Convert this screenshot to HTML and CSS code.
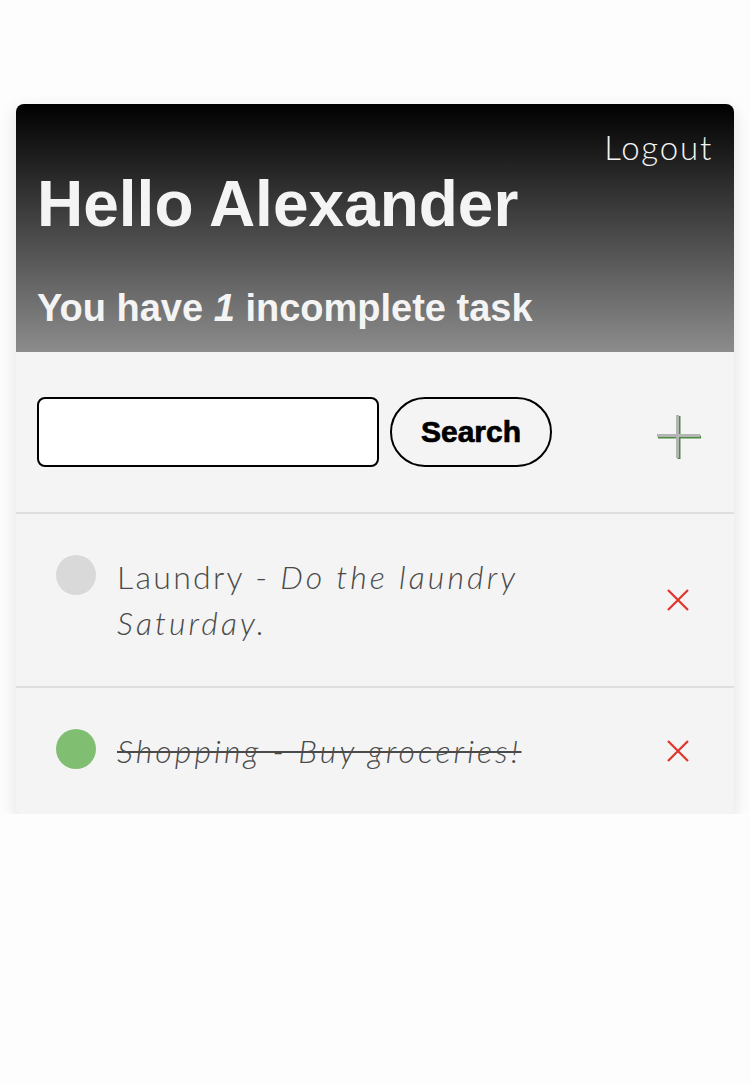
FILE: index.html
```html
<!DOCTYPE html>
<html>
<head>
<meta charset="utf-8">
<link rel="stylesheet" href="styles.css">
</head>
<body>
<div class="card">
  <header class="head">
    <div class="logout">Logout</div>
    <h1 class="hello">Hello Alexander</h1>
    <p class="count">You have <em>1</em> incomplete task</p>
  </header>
  <div class="search-row">
    <input class="search-input" type="text">
    <button class="search-btn">Search</button>
    <div class="spacer"></div>
    <svg class="plus" width="48" height="48" viewBox="0 0 48 48">
      <g stroke="#4f8a45" stroke-width="3">
        <line x1="3" y1="24" x2="46" y2="24"/>
        <line x1="24" y1="3" x2="24" y2="46"/>
      </g>
      <g stroke="#b4b4b4" stroke-width="3">
        <line x1="2" y1="22.5" x2="45" y2="22.5"/>
        <line x1="22.5" y1="2" x2="22.5" y2="45"/>
      </g>
    </svg>
  </div>
  <ul class="tasks">
    <li class="task">
      <span class="dot"></span>
      <span class="text">Laundry - <em>Do the laundry Saturday.</em></span>
      <svg class="del" width="24" height="24" viewBox="0 0 24 24"><path d="M2 2L22 22M22 2L2 22" stroke="#e0342a" stroke-width="2.2"/></svg>
    </li>
    <li class="task">
      <span class="dot done"></span>
      <span class="text striked"><em>Shopping - Buy groceries!</em></span>
      <svg class="del" width="24" height="24" viewBox="0 0 24 24"><path d="M2 2L22 22M22 2L2 22" stroke="#e0342a" stroke-width="2.2"/></svg>
    </li>
  </ul>
</div>
</body>
</html>
```
FILE: styles.css
```css
html, body {
  margin: 0;
  padding: 0;
  background: #fdfdfd;
}
body {
  padding: 104px 16px 0 16px;
}
.card {
  background: #f4f4f4;
  border-radius: 8px 8px 6px 6px;
  box-shadow: 0 6px 18px rgba(0,0,0,0.12);
  overflow: hidden;
}
.head {
  height: 248px;
  box-sizing: border-box;
  padding: 25px 21px 0 21px;
  background: linear-gradient(to bottom, #000000 0%, #8c8c8c 100%);
  color: #f4f4f4;
  display: flex;
  flex-direction: column;
}
.logout {
  align-self: flex-end;
  font-family: Lato, "Open Sans", sans-serif;
  font-weight: 300;
  font-size: 33px;
  letter-spacing: 1.8px;
  line-height: 36px;
}
.hello {
  margin: 3px 0 0 0;
  font-family: "Liberation Sans", Arial, sans-serif;
  font-weight: 700;
  font-size: 64px;
  line-height: 72px;
}
.count {
  margin: 46px 0 0 0;
  font-family: "Liberation Sans", Arial, sans-serif;
  font-weight: 700;
  font-size: 38px;
  line-height: 44px;
}
.count em {
  font-style: italic;
}
.search-row {
  display: flex;
  align-items: center;
  padding: 45px 31px 45px 21px;
  border-bottom: 2px solid #dedede;
}
.search-input {
  width: 342px;
  height: 70px;
  box-sizing: border-box;
  border: 2px solid #000;
  border-radius: 8px;
  background: #fff;
  margin: 0;
}
.search-btn {
  margin-left: 11px;
  width: 162px;
  height: 70px;
  box-sizing: border-box;
  border: 2px solid #000;
  border-radius: 35px;
  background: #f4f4f4;
  font-family: "Liberation Sans", Arial, sans-serif;
  font-weight: 700;
  font-size: 30px;
  -webkit-text-stroke: 0.7px #000;
  color: #000;
  padding: 0;
}
.spacer {
  flex: 1;
}
.plus {
  display: block;
  margin-top: 10px;
}
.tasks {
  list-style: none;
  margin: 0;
  padding: 0;
}
.task {
  display: flex;
  align-items: flex-start;
  padding: 40px 44px 40px 40px;
}
.task + .task {
  border-top: 2px solid #dedede;
}
.dot {
  flex: none;
  width: 40px;
  height: 40px;
  border-radius: 50%;
  background: #d9d9d9;
  margin-top: 1px;
}
.dot.done {
  background: #80bf72;
}
.text {
  flex: 1;
  margin-left: 21px;
  margin-right: 40px;
  max-width: 440px;
  font-family: Lato, "Open Sans", sans-serif;
  font-weight: 300;
  font-size: 32px;
  letter-spacing: 2.3px;
  line-height: 46px;
  color: #4a4a4a;
}
.text em {
  font-style: italic;
  letter-spacing: 3.1px;
}
.striked {
  text-decoration: line-through;
  text-decoration-thickness: 2px;
}
.del {
  flex: none;
  align-self: center;
  margin-left: auto;
}
```
